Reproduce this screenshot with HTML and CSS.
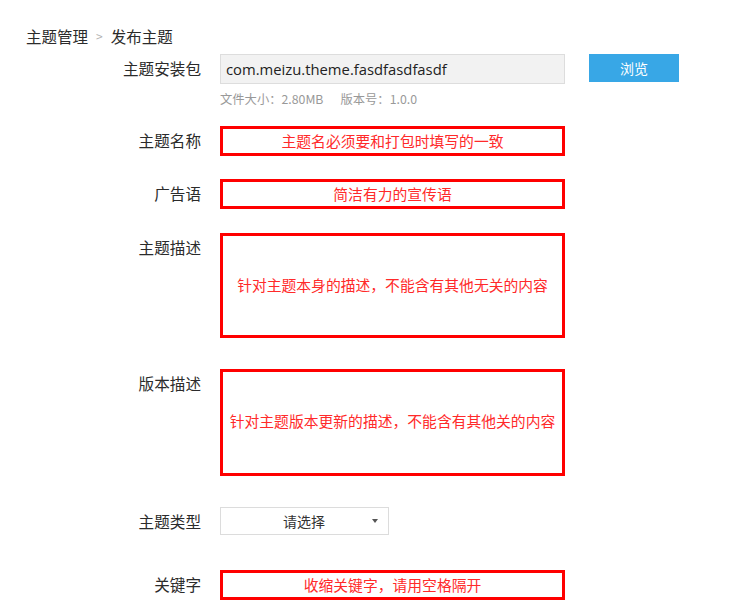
FILE: index.html
```html
<!DOCTYPE html>
<html lang="zh-CN">
<head>
<meta charset="utf-8">
<title>发布主题</title>
<link rel="stylesheet" href="styles.css">
</head>
<body>
<div class="page">
  <div class="crumb"><span class="crumb-item">主题管理</span><span class="crumb-sep">&gt;</span><span class="crumb-item">发布主题</span></div>

  <div class="row row-pkg">
    <div class="label">主题安装包</div>
    <div class="field">
      <div class="pkg-input">com.meizu.theme.fasdfasdfasdf</div>
      <div class="hint"><span>文件大小：2.80MB</span><span>版本号：1.0.0</span></div>
    </div>
    <div class="btn">浏览</div>
  </div>

  <div class="row row-name">
    <div class="label">主题名称</div>
    <div class="field"><div class="redbox">主题名必须要和打包时填写的一致</div></div>
  </div>

  <div class="row row-slogan">
    <div class="label">广告语</div>
    <div class="field"><div class="redbox">简洁有力的宣传语</div></div>
  </div>

  <div class="row row-desc">
    <div class="label">主题描述</div>
    <div class="field"><div class="redbox tall">针对主题本身的描述，不能含有其他无关的内容</div></div>
  </div>

  <div class="row row-ver">
    <div class="label">版本描述</div>
    <div class="field"><div class="redbox tall2">针对主题版本更新的描述，不能含有其他关的内容</div></div>
  </div>

  <div class="row row-type">
    <div class="label">主题类型</div>
    <div class="field">
      <div class="select"><span class="select-text">请选择</span><span class="caret"></span></div>
    </div>
  </div>

  <div class="row row-kw">
    <div class="label">关键字</div>
    <div class="field"><div class="redbox">收缩关键字，请用空格隔开</div></div>
  </div>
</div>
</body>
</html>
```

FILE: styles.css
```css
html, body {
  margin: 0;
  padding: 0;
  background: #ffffff;
}
body {
  font-family: "Noto Sans CJK SC", "Noto Sans", sans-serif;
  color: #333333;
  overflow: hidden;
}
.page {
  width: 739px;
  height: 600px;
  padding-top: 26px;
  box-sizing: border-box;
}
.crumb {
  display: flex;
  align-items: center;
  padding-left: 26px;
  height: 20px;
  line-height: 20px;
  font-size: 15.5px;
  color: #2b2b2b;
}
.crumb-sep {
  color: #b5b5b5;
  font-size: 12px;
  margin: 0 8px 0 8px;
}
.row {
  display: flex;
  align-items: flex-start;
}
.label {
  width: 201px;
  flex: none;
  text-align: right;
  font-size: 15.6px;
  line-height: 28px;
  height: 30px;
  color: #2b2b2b;
}
.field {
  margin-left: 19px;
  width: 345px;
  flex: none;
}
.row-pkg { margin-top: 8px; }
.row-name { margin-top: 19px; }
.row-slogan { margin-top: 23px; }
.row-desc { margin-top: 24px; }
.row-ver { margin-top: 31px; }
.row-type { margin-top: 31px; }
.row-kw { margin-top: 33px; }

.pkg-input {
  box-sizing: border-box;
  height: 30px;
  line-height: 28px;
  border: 1px solid #dddddd;
  background: #f2f2f2;
  padding-left: 5px;
  font-family: "Open Sans", "Noto Sans CJK SC", sans-serif;
  font-size: 14.8px;
  color: #222;
}
.hint {
  margin-top: 7px;
  font-size: 12.3px;
  line-height: 16px;
  color: #999999;
  display: flex;
  gap: 17px;
  font-family: "Noto Sans CJK SC", "Open Sans", sans-serif;
}
.btn {
  margin-left: 24px;
  width: 90px;
  height: 28px;
  line-height: 28px;
  background: #38a7e6;
  color: #ffffff;
  text-align: center;
  font-size: 14px;
}
.redbox {
  box-sizing: border-box;
  height: 30px;
  border: 3px solid #ff0000;
  color: #ff2a2a;
  font-size: 14.8px;
  display: flex;
  align-items: center;
  justify-content: center;
  line-height: 20px;
}
.redbox.tall { height: 105px; padding-bottom: 2px; }
.redbox.tall2 { height: 107px; padding-bottom: 4px; }
.select {
  box-sizing: border-box;
  width: 169px;
  height: 28px;
  border: 1px solid #dcdcdc;
  display: flex;
  align-items: center;
  position: relative;
  font-size: 14px;
  color: #333;
}
.select-text {
  margin-left: 62px;
  line-height: 20px;
}
.caret {
  position: absolute;
  right: 10px;
  top: 11px;
  width: 0;
  height: 0;
  border-left: 3.5px solid transparent;
  border-right: 3.5px solid transparent;
  border-top: 4px solid #555;
}
```
